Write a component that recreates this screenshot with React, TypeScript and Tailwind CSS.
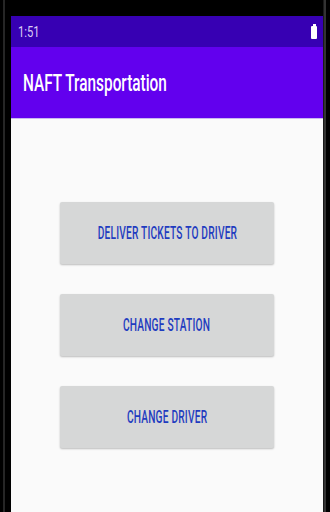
export default function App() {
  const btn =
    "w-[214px] h-[62px] bg-[#d6d7d7] rounded-[2px] shadow-[0_1px_2px_rgba(0,0,0,0.25)] flex items-center justify-center";
  const btnText =
    "inline-block scale-x-[0.535] origin-center whitespace-nowrap text-[19px] font-medium tracking-[0.02em] text-[#1f3cc0] font-['Roboto',sans-serif]";
  return (
    <div className="w-[330px] h-[512px] bg-black flex overflow-hidden">
      <div className="w-[3px] shrink-0" />
      <div className="w-[2px] shrink-0 bg-[#262626]" />
      <div className="w-[6px] shrink-0" />
      <div className="flex-1 flex flex-col pt-[16px]">
        <div className="flex-1 flex flex-col bg-[#fafafa]">
          <div className="h-[31px] bg-[#3700b3] flex items-center justify-between pl-[7px] pr-[6px]">
            <span className="inline-block scale-x-[0.8] origin-left text-[14px] text-[#d9ccf5] font-['Roboto',sans-serif] leading-none">
              1:51
            </span>
            <div className="flex flex-col items-center">
              <div className="w-[3px] h-[2px] bg-white" />
              <div className="w-[6px] h-[13px] bg-white rounded-[1px]" />
            </div>
          </div>
          <div className="h-[71px] bg-[#6200ee] flex items-center pl-[12px]">
            <span className="inline-block scale-x-[0.64] origin-left whitespace-nowrap text-[24px] font-medium text-white font-['Roboto',sans-serif] leading-none">
              NAFT Transportation
            </span>
          </div>
          <div className="h-[1px] bg-[#c9b8f0]" />
          <div className="flex flex-col items-center pt-[83px] gap-[30px]">
            <div className={btn}>
              <span className={btnText}>DELIVER TICKETS TO DRIVER</span>
            </div>
            <div className={btn}>
              <span className={btnText}>CHANGE STATION</span>
            </div>
            <div className={btn}>
              <span className={btnText}>CHANGE DRIVER</span>
            </div>
          </div>
        </div>
      </div>
      <div className="w-[1px] shrink-0 bg-[#1a1a1a]" />
      <div className="w-[2px] shrink-0 bg-[#333]" />
      <div className="w-[4px] shrink-0" />
    </div>
  );
}
